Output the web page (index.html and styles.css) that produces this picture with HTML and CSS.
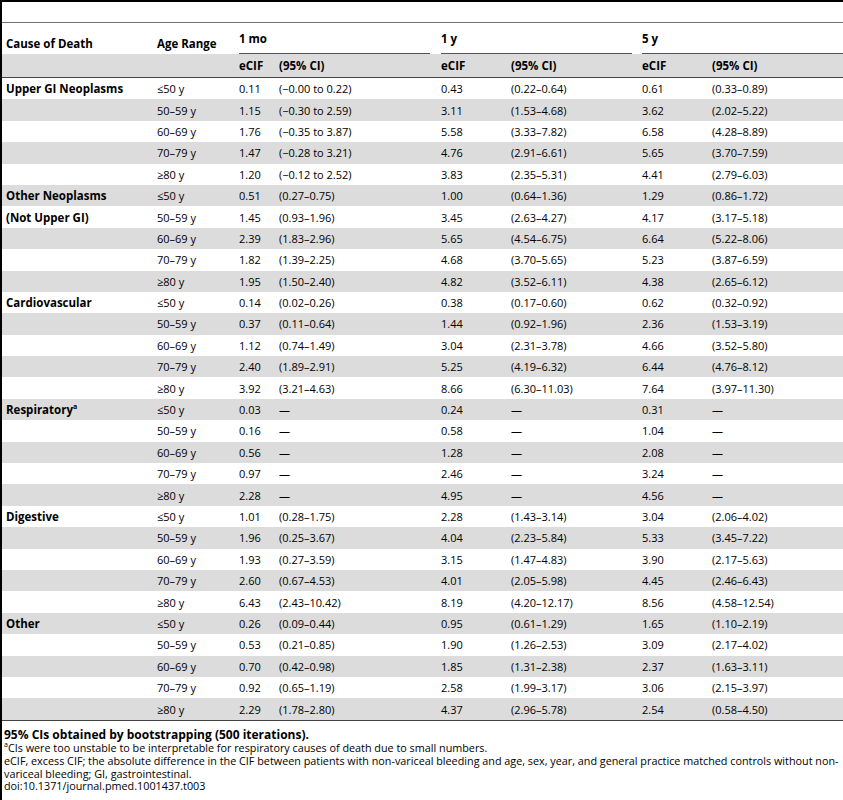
FILE: index.html
```html
<!doctype html>
<html>
  <head>
    <title>Table 3</title>
    <link rel="stylesheet" href="styles.css">
  </head>
  <body>
    <div class="page">
      <table class="results">
        <colgroup>
          <col class="w-cause"><col class="w-age">
          <col class="w-e1"><col class="w-ci1">
          <col class="w-e2"><col class="w-ci2">
          <col class="w-e3"><col class="w-ci3">
        </colgroup>
        <thead>
          <tr class="head-top">
            <th class="label">Cause of Death</th>
            <th class="label">Age Range</th>
            <th colspan="2" class="grp grp-1"><div>1 mo</div></th>
            <th colspan="2" class="grp grp-2"><div>1 y</div></th>
            <th colspan="2" class="grp grp-3"><div>5 y</div></th>
          </tr>
          <tr class="head-sub">
            <th></th><th></th>
            <th>eCIF</th><th>(95% CI)</th>
            <th>eCIF</th><th>(95% CI)</th>
            <th>eCIF</th><th>(95% CI)</th>
          </tr>
        </thead>
        <tbody>
          <tr><td class="cause">Upper GI Neoplasms</td><td>≤50 y</td><td>0.11</td><td>(−0.00 to 0.22)</td><td>0.43</td><td>(0.22–0.64)</td><td>0.61</td><td>(0.33–0.89)</td></tr>
          <tr><td></td><td>50–59 y</td><td>1.15</td><td>(−0.30 to 2.59)</td><td>3.11</td><td>(1.53–4.68)</td><td>3.62</td><td>(2.02–5.22)</td></tr>
          <tr><td></td><td>60–69 y</td><td>1.76</td><td>(−0.35 to 3.87)</td><td>5.58</td><td>(3.33–7.82)</td><td>6.58</td><td>(4.28–8.89)</td></tr>
          <tr><td></td><td>70–79 y</td><td>1.47</td><td>(−0.28 to 3.21)</td><td>4.76</td><td>(2.91–6.61)</td><td>5.65</td><td>(3.70–7.59)</td></tr>
          <tr><td></td><td>≥80 y</td><td>1.20</td><td>(−0.12 to 2.52)</td><td>3.83</td><td>(2.35–5.31)</td><td>4.41</td><td>(2.79–6.03)</td></tr>

          <tr><td class="cause">Other Neoplasms</td><td>≤50 y</td><td>0.51</td><td>(0.27–0.75)</td><td>1.00</td><td>(0.64–1.36)</td><td>1.29</td><td>(0.86–1.72)</td></tr>
          <tr><td class="cause">(Not Upper GI)</td><td>50–59 y</td><td>1.45</td><td>(0.93–1.96)</td><td>3.45</td><td>(2.63–4.27)</td><td>4.17</td><td>(3.17–5.18)</td></tr>
          <tr><td></td><td>60–69 y</td><td>2.39</td><td>(1.83–2.96)</td><td>5.65</td><td>(4.54–6.75)</td><td>6.64</td><td>(5.22–8.06)</td></tr>
          <tr><td></td><td>70–79 y</td><td>1.82</td><td>(1.39–2.25)</td><td>4.68</td><td>(3.70–5.65)</td><td>5.23</td><td>(3.87–6.59)</td></tr>
          <tr><td></td><td>≥80 y</td><td>1.95</td><td>(1.50–2.40)</td><td>4.82</td><td>(3.52–6.11)</td><td>4.38</td><td>(2.65–6.12)</td></tr>

          <tr><td class="cause">Cardiovascular</td><td>≤50 y</td><td>0.14</td><td>(0.02–0.26)</td><td>0.38</td><td>(0.17–0.60)</td><td>0.62</td><td>(0.32–0.92)</td></tr>
          <tr><td></td><td>50–59 y</td><td>0.37</td><td>(0.11–0.64)</td><td>1.44</td><td>(0.92–1.96)</td><td>2.36</td><td>(1.53–3.19)</td></tr>
          <tr><td></td><td>60–69 y</td><td>1.12</td><td>(0.74–1.49)</td><td>3.04</td><td>(2.31–3.78)</td><td>4.66</td><td>(3.52–5.80)</td></tr>
          <tr><td></td><td>70–79 y</td><td>2.40</td><td>(1.89–2.91)</td><td>5.25</td><td>(4.19–6.32)</td><td>6.44</td><td>(4.76–8.12)</td></tr>
          <tr><td></td><td>≥80 y</td><td>3.92</td><td>(3.21–4.63)</td><td>8.66</td><td>(6.30–11.03)</td><td>7.64</td><td>(3.97–11.30)</td></tr>

          <tr><td class="cause">Respiratory<sup>a</sup></td><td>≤50 y</td><td>0.03</td><td>—</td><td>0.24</td><td>—</td><td>0.31</td><td>—</td></tr>
          <tr><td></td><td>50–59 y</td><td>0.16</td><td>—</td><td>0.58</td><td>—</td><td>1.04</td><td>—</td></tr>
          <tr><td></td><td>60–69 y</td><td>0.56</td><td>—</td><td>1.28</td><td>—</td><td>2.08</td><td>—</td></tr>
          <tr><td></td><td>70–79 y</td><td>0.97</td><td>—</td><td>2.46</td><td>—</td><td>3.24</td><td>—</td></tr>
          <tr><td></td><td>≥80 y</td><td>2.28</td><td>—</td><td>4.95</td><td>—</td><td>4.56</td><td>—</td></tr>

          <tr><td class="cause">Digestive</td><td>≤50 y</td><td>1.01</td><td>(0.28–1.75)</td><td>2.28</td><td>(1.43–3.14)</td><td>3.04</td><td>(2.06–4.02)</td></tr>
          <tr><td></td><td>50–59 y</td><td>1.96</td><td>(0.25–3.67)</td><td>4.04</td><td>(2.23–5.84)</td><td>5.33</td><td>(3.45–7.22)</td></tr>
          <tr><td></td><td>60–69 y</td><td>1.93</td><td>(0.27–3.59)</td><td>3.15</td><td>(1.47–4.83)</td><td>3.90</td><td>(2.17–5.63)</td></tr>
          <tr><td></td><td>70–79 y</td><td>2.60</td><td>(0.67–4.53)</td><td>4.01</td><td>(2.05–5.98)</td><td>4.45</td><td>(2.46–6.43)</td></tr>
          <tr><td></td><td>≥80 y</td><td>6.43</td><td>(2.43–10.42)</td><td>8.19</td><td>(4.20–12.17)</td><td>8.56</td><td>(4.58–12.54)</td></tr>

          <tr><td class="cause">Other</td><td>≤50 y</td><td>0.26</td><td>(0.09–0.44)</td><td>0.95</td><td>(0.61–1.29)</td><td>1.65</td><td>(1.10–2.19)</td></tr>
          <tr><td></td><td>50–59 y</td><td>0.53</td><td>(0.21–0.85)</td><td>1.90</td><td>(1.26–2.53)</td><td>3.09</td><td>(2.17–4.02)</td></tr>
          <tr><td></td><td>60–69 y</td><td>0.70</td><td>(0.42–0.98)</td><td>1.85</td><td>(1.31–2.38)</td><td>2.37</td><td>(1.63–3.11)</td></tr>
          <tr><td></td><td>70–79 y</td><td>0.92</td><td>(0.65–1.19)</td><td>2.58</td><td>(1.99–3.17)</td><td>3.06</td><td>(2.15–3.97)</td></tr>
          <tr><td></td><td>≥80 y</td><td>2.29</td><td>(1.78–2.80)</td><td>4.37</td><td>(2.96–5.78)</td><td>2.54</td><td>(0.58–4.50)</td></tr>
        </tbody>
      </table>
      <div class="notes">
        <p class="note-title">95% CIs obtained by bootstrapping (500 iterations).</p>
        <p><sup>a</sup>CIs were too unstable to be interpretable for respiratory causes of death due to small numbers.</p>
        <p>eCIF, excess CIF; the absolute difference in the CIF between patients with non-variceal bleeding and age, sex, year, and general practice matched controls without non-variceal bleeding; GI, gastrointestinal.</p>
        <p>doi:10.1371/journal.pmed.1001437.t003</p>
      </div>
    </div>
  </body>
</html>
```

FILE: styles.css
```css
body {
  margin: 0;
  background: #fff;
  color: #000;
  font-family: "Open Sans", Arial, sans-serif;
}
.page {
  border-left: 2px solid #000;
  border-top: 2px solid #000;
  padding-top: 20px;
  min-height: 778px;
}
.results {
  width: 841px;
  table-layout: fixed;
  border-collapse: collapse;
  border-spacing: 0;
  border-top: 1px solid #707070;
  border-bottom: 1px solid #444;
  font-size: 11px;
}
.w-cause { width: 151px; }
.w-age { width: 82px; }
.w-e1 { width: 40px; }
.w-ci1 { width: 162px; }
.w-e2 { width: 70px; }
.w-ci2 { width: 131px; }
.w-e3 { width: 70px; }
.w-ci3 { width: 135px; }

th, td {
  padding: 0 0 0 4px;
  text-align: left;
  white-space: nowrap;
}
th {
  font-weight: bold;
  font-size: 11.5px;
}
.head-top th {
  height: 28px;
  vertical-align: bottom;
}
.head-top .label {
  padding-bottom: 3px;
}
.grp div {
  border-bottom: 1px solid #555;
  padding-bottom: 7px;
}
.grp-1 { padding-right: 7px; }
.grp-2 { padding-right: 6px; }
.grp-3 { padding-right: 0; }

.head-sub th {
  height: 23px;
  background: #dcdcdc;
  border-bottom: 1px solid #444;
}
tbody td {
  height: 21.4px;
  vertical-align: middle;
}
tbody tr:nth-child(even) td {
  background: #dcdcdc;
}
.cause {
  font-weight: bold;
  font-size: 11.5px;
}
.cause sup, .notes sup {
  font-size: 7px;
  line-height: 0;
}

.notes {
  margin-top: 7px;
  padding-left: 2px;
  font-size: 10.8px;
  line-height: 12.9px;
}
.notes p {
  margin: 0;
}
.note-title {
  font-weight: bold;
  font-size: 12px;
  line-height: 14px;
}
```
